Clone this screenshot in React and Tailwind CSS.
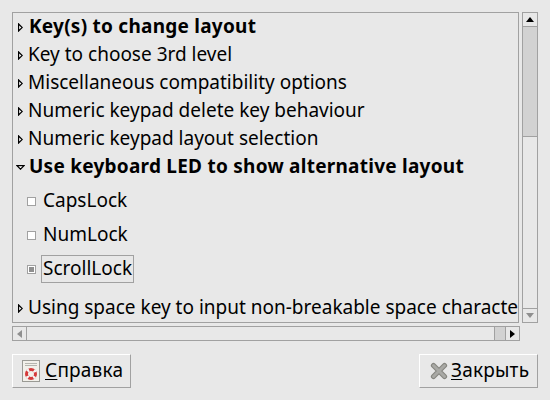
import React from 'react';

const font = "font-['Noto_Sans','Open_Sans',sans-serif]";

const ArrowRight = () => (
  <svg width="5" height="9" viewBox="0 0 5 9" className="shrink-0">
    <path d="M0.6 1 L4.2 4.5 L0.6 8 Z" fill="#fff" stroke="#000" strokeWidth="1.2" />
  </svg>
);

const ArrowDown = () => (
  <svg width="9" height="5" viewBox="0 0 9 5" className="shrink-0">
    <path d="M1 0.6 L8 0.6 L4.5 4.2 Z" fill="#fff" stroke="#000" strokeWidth="1.2" />
  </svg>
);

const Row = ({ label, bold, open }) => (
  <div className="flex h-7 items-center">
    <div className="flex w-[15px] shrink-0 justify-center">
      {open ? <ArrowDown /> : <ArrowRight />}
    </div>
    <span className={`whitespace-nowrap pb-[2px] text-[19px] ${bold ? 'font-bold pl-[1px] tracking-[0.25px]' : ''}`}>{label}</span>
  </div>
);

const Check = ({ label, checked, focused, className }) => (
  <div className={`flex items-center ${className}`}>
    <div className="flex h-[9px] w-[9px] shrink-0 items-center justify-center border border-[#a1a1a1] bg-white">
      {checked && <div className="h-[5px] w-[5px] bg-[#8f8f8f]" />}
    </div>
    <span
      className={`ml-[5px] flex h-[28px] items-center whitespace-nowrap border px-[1px] pb-[2px] text-[19px] ${
        focused ? 'border-[#a1a1a1]' : 'border-transparent'
      }`}
    >
      {label}
    </span>
  </div>
);

const HelpIcon = () => (
  <svg width="18" height="22" viewBox="0 0 18 22" className="shrink-0">
    <rect x="0.5" y="0.5" width="17" height="21" fill="#f2f0ea" stroke="#9a9a94" />
    <path d="M3 3.5 H15 M3 5.5 H15" stroke="#b5b5ae" strokeWidth="1" />
    <circle cx="9" cy="14" r="4.5" fill="none" stroke="#d43a3a" strokeWidth="3" />
    <circle cx="9" cy="14" r="4.5" fill="none" stroke="#f5f5f5" strokeWidth="3" strokeDasharray="2 5.07" strokeDashoffset="-2.5" />
  </svg>
);

const CloseIcon = () => (
  <svg width="18" height="18" viewBox="0 0 18 18" className="shrink-0">
    <path d="M3.5 3.5 L14.5 14.5 M14.5 3.5 L3.5 14.5" stroke="#85857f" strokeWidth="5.2" strokeLinecap="round" />
    <path d="M3.5 3.5 L14.5 14.5 M14.5 3.5 L3.5 14.5" stroke="#a9a9a5" strokeWidth="3" strokeLinecap="round" />
  </svg>
);

const App = () => {
  return (
    <div className={`flex h-[400px] w-[550px] flex-col bg-[#e8e8e8] px-3 pt-3 text-[#000] ${font}`}>
      <div className="flex h-[311px] gap-[3px]">
        <div className="h-full w-[508px] overflow-hidden border border-[#a1a1a1]">
          <Row label="Key(s) to change layout" bold />
          <Row label="Key to choose 3rd level" />
          <Row label="Miscellaneous compatibility options" />
          <Row label="Numeric keypad delete key behaviour" />
          <Row label="Numeric keypad layout selection" />
          <Row label="Use keyboard LED to show alternative layout" bold open />
          <div className="pl-[14px] pt-[6px]">
            <Check label="CapsLock" className="mb-[6px]" />
            <Check label="NumLock" className="mb-[6px]" />
            <Check label="ScrollLock" checked focused />
          </div>
          <div className="mt-[11px]">
            <Row label="Using space key to input non-breakable space character" />
          </div>
        </div>

        <div className="flex h-full w-[16px] flex-col border border-[#a1a1a1]">
          <div className="flex h-[14px] shrink-0 items-center justify-center border-b border-[#a1a1a1]">
            <svg width="8" height="5" viewBox="0 0 8 5"><path d="M4 0 L8 5 L0 5 Z" fill="#000" /></svg>
          </div>
          <div className="h-[110px] shrink-0 border-b border-[#a1a1a1] bg-[#d2d2d2]" />
          <div className="flex-1" />
          <div className="flex h-[14px] shrink-0 items-center justify-center border-t border-[#a1a1a1]">
            <svg width="8" height="5" viewBox="0 0 8 5"><path d="M0 0 L8 0 L4 5 Z" fill="#8f8f8f" /></svg>
          </div>
        </div>
      </div>

      <div className="mt-[3px] flex h-[15px] w-[508px] border border-[#a1a1a1]">
        <div className="flex w-[14px] shrink-0 items-center justify-center border-r border-[#a1a1a1]">
          <svg width="5" height="8" viewBox="0 0 5 8"><path d="M5 0 L5 8 L0 4 Z" fill="#8f8f8f" /></svg>
        </div>
        <div className="flex-1" />
        <div className="w-[11px] shrink-0 border-l border-[#a1a1a1] bg-[#d2d2d2]" />
        <div className="flex w-[14px] shrink-0 items-center justify-center border-l border-[#a1a1a1]">
          <svg width="5" height="8" viewBox="0 0 5 8"><path d="M0 0 L5 4 L0 8 Z" fill="#000" /></svg>
        </div>
      </div>

      <div className="mt-[13px] flex items-start justify-between">
        <button className="flex h-[34px] w-[119px] items-center border border-[#a1a1a1] border-l-white border-t-white pl-[9px] text-[19px] tracking-[0.2px]">
          <HelpIcon />
          <span className="ml-[5px] pb-[2px]"><span className="underline underline-offset-2">С</span>правка</span>
        </button>
        <button className="flex h-[34px] w-[119px] items-center border border-[#a1a1a1] border-l-white border-t-white pl-[10px] text-[19px] tracking-[0.2px]">
          <CloseIcon />
          <span className="ml-[3px] pb-[2px]"><span className="underline underline-offset-2">З</span>акрыть</span>
        </button>
      </div>
    </div>
  );
};

export default App;
